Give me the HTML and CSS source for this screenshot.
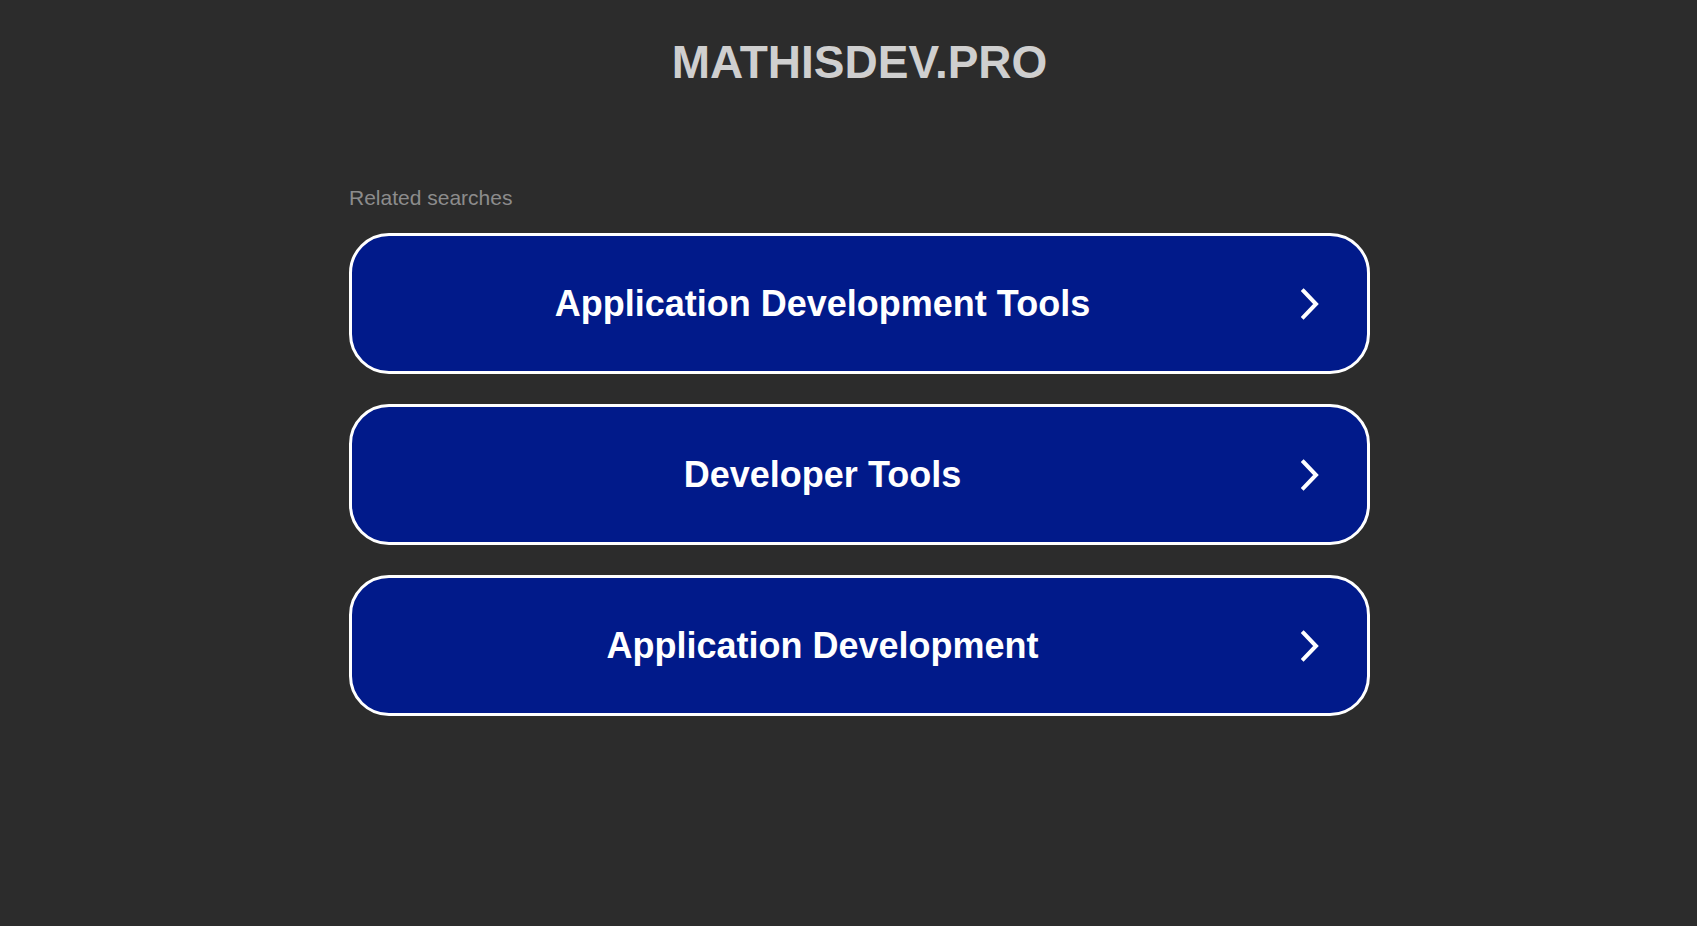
FILE: index.html
```html
<!DOCTYPE html>
<html lang="en">
<head>
<meta charset="utf-8">
<title>mathisdev.pro</title>
<link rel="stylesheet" href="styles.css">
</head>
<body>
<div class="page">
  <header class="header">
    <h1 class="domain">MATHISDEV.PRO</h1>
  </header>
  <main class="content">
    <p class="related">Related searches</p>
    <ul class="links">
      <li><a class="link" href="#"><span class="link-text">Application Development Tools</span><span class="link-arrow"><svg width="18" height="32" viewBox="0 0 18 32"><polyline points="2.5,3 15,16 2.5,29" fill="none" stroke="#fff" stroke-width="4" stroke-linecap="square"/></svg></span></a></li>
      <li><a class="link" href="#"><span class="link-text">Developer Tools</span><span class="link-arrow"><svg width="18" height="32" viewBox="0 0 18 32"><polyline points="2.5,3 15,16 2.5,29" fill="none" stroke="#fff" stroke-width="4" stroke-linecap="square"/></svg></span></a></li>
      <li><a class="link" href="#"><span class="link-text">Application Development</span><span class="link-arrow"><svg width="18" height="32" viewBox="0 0 18 32"><polyline points="2.5,3 15,16 2.5,29" fill="none" stroke="#fff" stroke-width="4" stroke-linecap="square"/></svg></span></a></li>
    </ul>
  </main>
</div>
</body>
</html>
```

FILE: styles.css
```css
html, body {
  margin: 0;
  padding: 0;
  background: #2c2c2c;
  height: 100%;
}

body {
  font-family: "Liberation Sans", Arial, sans-serif;
}

.page {
  padding-left: 22px;
  box-sizing: border-box;
  min-height: 100%;
}

.header {
  padding-top: 36px;
  text-align: center;
}

.domain {
  margin: 0;
  font-size: 46px;
  line-height: 52px;
  font-weight: 700;
  color: #cfcfcf;
}

.content {
  width: 1021px;
  margin: 98px auto 0;
}

.related {
  margin: 0 0 23px;
  font-size: 21px;
  line-height: 24px;
  color: #8c8c8c;
}

.links {
  list-style: none;
  margin: 0;
  padding: 0;
  display: flex;
  flex-direction: column;
  gap: 30px;
}

.link {
  display: flex;
  align-items: center;
  height: 141px;
  box-sizing: border-box;
  border: 3px solid #ffffff;
  border-radius: 40px;
  background: #011a8a;
  color: #ffffff;
  text-decoration: none;
}

.link-text {
  flex: 1;
  text-align: center;
  font-size: 36px;
  font-weight: 700;
  line-height: 40px;
}

.link-arrow {
  width: 74px;
  display: flex;
  align-items: center;
  padding-left: 8px;
  box-sizing: border-box;
}

.link-arrow svg {
  display: block;
}
```
